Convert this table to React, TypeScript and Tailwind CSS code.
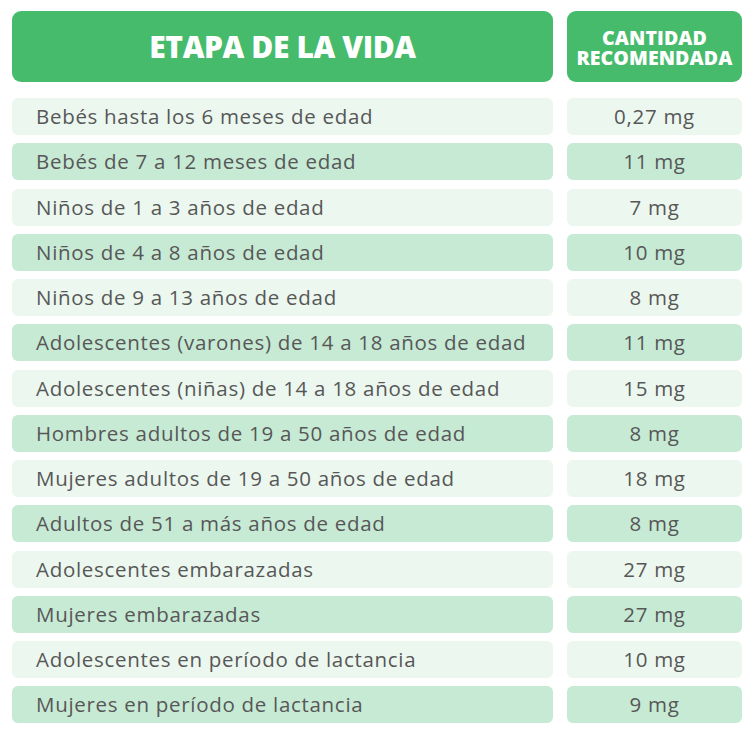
import React from "react";

const rows: [string, string][] = [
  ["Bebés hasta los 6 meses de edad", "0,27 mg"],
  ["Bebés de 7 a 12 meses de edad", "11 mg"],
  ["Niños de 1 a 3 años de edad", "7 mg"],
  ["Niños de 4 a 8 años de edad", "10 mg"],
  ["Niños de 9 a 13 años de edad", "8 mg"],
  ["Adolescentes (varones) de 14 a 18 años de edad", "11 mg"],
  ["Adolescentes (niñas) de 14 a 18 años de edad", "15 mg"],
  ["Hombres adultos de 19 a 50 años de edad", "8 mg"],
  ["Mujeres adultos de 19 a 50 años de edad", "18 mg"],
  ["Adultos de 51 a más años de edad", "8 mg"],
  ["Adolescentes embarazadas", "27 mg"],
  ["Mujeres embarazadas", "27 mg"],
  ["Adolescentes en período de lactancia", "10 mg"],
  ["Mujeres en período de lactancia", "9 mg"],
];

export default function App() {
  return (
    <div
      className="w-[754px] h-[741px] bg-white pt-[11px] pl-[12px] pr-[12px]"
      style={{ fontFamily: "'Open Sans', 'Noto Sans', sans-serif" }}
    >
      <div className="flex gap-[14px]">
        <div className="w-[541px] h-[71px] rounded-[9px] bg-[#46bb6c] flex items-center justify-center">
          <span className="text-white font-extrabold text-[30px] leading-[36px] tracking-[-0.4px]">ETAPA DE LA VIDA</span>
        </div>
        <div className="w-[175px] h-[71px] rounded-[9px] bg-[#46bb6c] flex items-center justify-center pt-[2px]">
          <p className="text-white text-center font-extrabold text-[19.5px] leading-[20px] tracking-[0.1px]">
            CANTIDAD
            <br />
            RECOMENDADA
          </p>
        </div>
      </div>
      <div className="mt-[16px] flex flex-col gap-[8.25px]">
        {rows.map(([a, b], i) => {
          const bg = i % 2 === 0 ? "bg-[#ecf7ef]" : "bg-[#c7ead5]";
          return (
            <div key={i} className="flex gap-[14px]">
              <div className={`w-[541px] h-[37px] rounded-[6px] ${bg} flex items-center pl-[24px]`}>
                <span className="text-[#575757] text-[20.5px] tracking-[0.7px] font-normal">{a}</span>
              </div>
              <div className={`w-[175px] h-[37px] rounded-[6px] ${bg} flex items-center justify-center`}>
                <span className="text-[#575757] text-[20.5px] tracking-[0.7px] font-normal">{b}</span>
              </div>
            </div>
          );
        })}
      </div>
    </div>
  );
}
